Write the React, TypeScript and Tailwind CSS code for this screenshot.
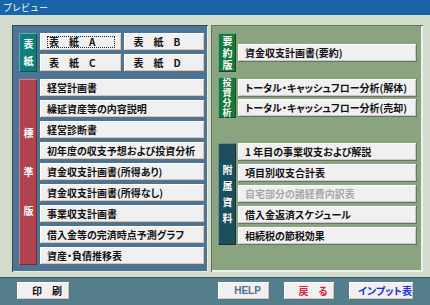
import React from "react";

const FONT = { fontFamily: '"Noto Sans CJK JP", "Noto Sans", sans-serif' };

const STANDARD = [
  "経営計画書",
  "繰延資産等の内容説明",
  "経営診断書",
  "初年度の収支予想および投資分析",
  "資金収支計画書(所得あり)",
  "資金収支計画書(所得なし)",
  "事業収支計画書",
  "借入金等の完済時点予測グラフ",
  "資産・負債推移表",
];

const APPENDIX = [
  { label: "1 年目の事業収支および解説" },
  { label: "項目別収支合計表" },
  { label: "自宅部分の諸経費内訳表", disabled: true },
  { label: "借入金返済スケジュール" },
  { label: "相続税の節税効果" },
];

function Btn({
  children,
  className = "",
  disabled = false,
}: {
  children: React.ReactNode;
  className?: string;
  disabled?: boolean;
}) {
  return (
    <button
      className={`relative flex h-[18px] items-center whitespace-nowrap bg-[#f0f0f0] pl-[7px] text-left text-[10px] font-bold leading-none [font-feature-settings:"palt"] shadow-[inset_-1px_-1px_0_#6e6e6e,inset_1px_1px_0_#ffffff,inset_-2px_-2px_0_#c8c8c8] ${
        disabled ? "text-[#a8a8a8]" : "text-[#111]"
      } ${className}`}
    >
      {children}
    </button>
  );
}

// vertical section tag; letter spacing sets the pitch, padding-top evens out the trailing space
function Label({
  text,
  className = "",
  textClass = "",
}: {
  text: string;
  className?: string;
  textClass?: string;
}) {
  return (
    <div
      className={`flex w-[18px] shrink-0 items-center justify-center text-white shadow-[inset_1px_1px_0_rgba(255,255,255,0.35),inset_-1px_-1px_0_rgba(0,0,0,0.35)] ${className}`}
    >
      <span className={`whitespace-nowrap font-bold leading-none [writing-mode:vertical-rl] ${textClass}`}>{text}</span>
    </div>
  );
}

export default function App() {
  return (
    <div className="flex h-[305px] w-[430px] flex-col overflow-hidden bg-[#d3dbcd]" style={FONT}>
      {/* title bar */}
      <div className="flex h-[15px] items-center bg-[#1765a8] pl-[3px] text-[9px] leading-none text-white">
        プレビュー
      </div>

      {/* panels */}
      <div className="flex gap-[3px] pl-[12px] pt-[10px]">
        {/* left */}
        <div className="flex h-[247px] w-[196px] flex-col gap-[7px] bg-[#4c7595] pl-[7px] pr-[3px] pt-[8px] shadow-[inset_1px_1px_0_#2d4a60,inset_-1px_-1px_0_#e8ece4]">
          <div className="flex h-[39px] gap-[3px]">
            <Label text="表紙" className="bg-[#107e7b]" textClass="pt-[7px] text-[10px] tracking-[7px]" />
            <div className="grid flex-1 grid-cols-2 gap-x-[2px] gap-y-[3px]">
              <Btn className="pl-[9px]">
                表　紙　A
                <span className="absolute inset-x-[7px] inset-y-[3px] border border-dotted border-[#222]" />
              </Btn>
              <Btn className="pl-[10px]">表　紙　B</Btn>
              <Btn className="pl-[9px]">表　紙　C</Btn>
              <Btn className="pl-[10px]">表　紙　D</Btn>
            </div>
          </div>
          <div className="flex h-[186px] gap-[3px]">
            <Label text="標準版" className="bg-[#b0434e]" textClass="pt-[29px] text-[10px] tracking-[29px]" />
            <div className="flex flex-1 flex-col gap-[3px]">
              {STANDARD.map((s) => (
                <Btn key={s}>{s}</Btn>
              ))}
            </div>
          </div>
        </div>

        {/* right */}
        <div className="flex h-[247px] w-[212px] flex-col bg-[#8aa47f] pl-[7px] pr-[6px] pt-[8px] shadow-[inset_1px_1px_0_#5d7556,inset_-2px_-2px_0_#eef0ea]">
          <div className="flex h-[39px] items-center gap-[2px]">
            <Label text="要約版" className="h-full bg-[#16793b]" textClass="pt-[2px] text-[10px] tracking-[2px]" />
            <Btn className="w-[179px]">資金収支計画書(要約)</Btn>
          </div>
          <div className="mt-[5px] flex h-[41px] items-center gap-[2px]">
            <Label text="投資分析" className="h-full bg-[#16793b]" textClass="pt-[1px] text-[9px] tracking-[1px]" />
            <div className="flex w-[179px] flex-col gap-[2px]">
              <Btn>トータル・キャッシュフロー分析(解体)</Btn>
              <Btn>トータル・キャッシュフロー分析(売却)</Btn>
            </div>
          </div>
          <div className="mt-[25px] flex h-[102px] gap-[2px]">
            <Label text="附属資料" className="bg-[#1c4e5b]" textClass="pt-[6px] text-[10px] tracking-[6px]" />
            <div className="flex w-[179px] flex-col gap-[3px]">
              {APPENDIX.map((a) => (
                <Btn key={a.label} disabled={a.disabled}>
                  {a.label}
                </Btn>
              ))}
            </div>
          </div>
        </div>
      </div>

      {/* bottom bar */}
      <div className="mt-[5px] flex flex-1 items-start bg-[#557e8d] pt-[5px] shadow-[inset_0_1px_0_#3c5d6a]">
        <Btn className="ml-[17px] h-[17px] w-[53px] justify-center pl-0">印　刷</Btn>
        <Btn className="ml-[148px] h-[17px] w-[52px] justify-center pl-0">
          <span className="text-[#4f6e90]" style={{ fontFamily: '"Liberation Sans", Arial, sans-serif' }}>
            HELP
          </span>
        </Btn>
        <Btn className="ml-[14px] h-[17px] w-[51px] justify-center pl-0">
          <span className="text-[#d3203f]">戻　る</span>
        </Btn>
        <Btn className="ml-[14px] h-[17px] w-[65px] justify-center pl-0">
          <span className="text-[#1c2fd6]">インプット表</span>
        </Btn>
      </div>
    </div>
  );
}
